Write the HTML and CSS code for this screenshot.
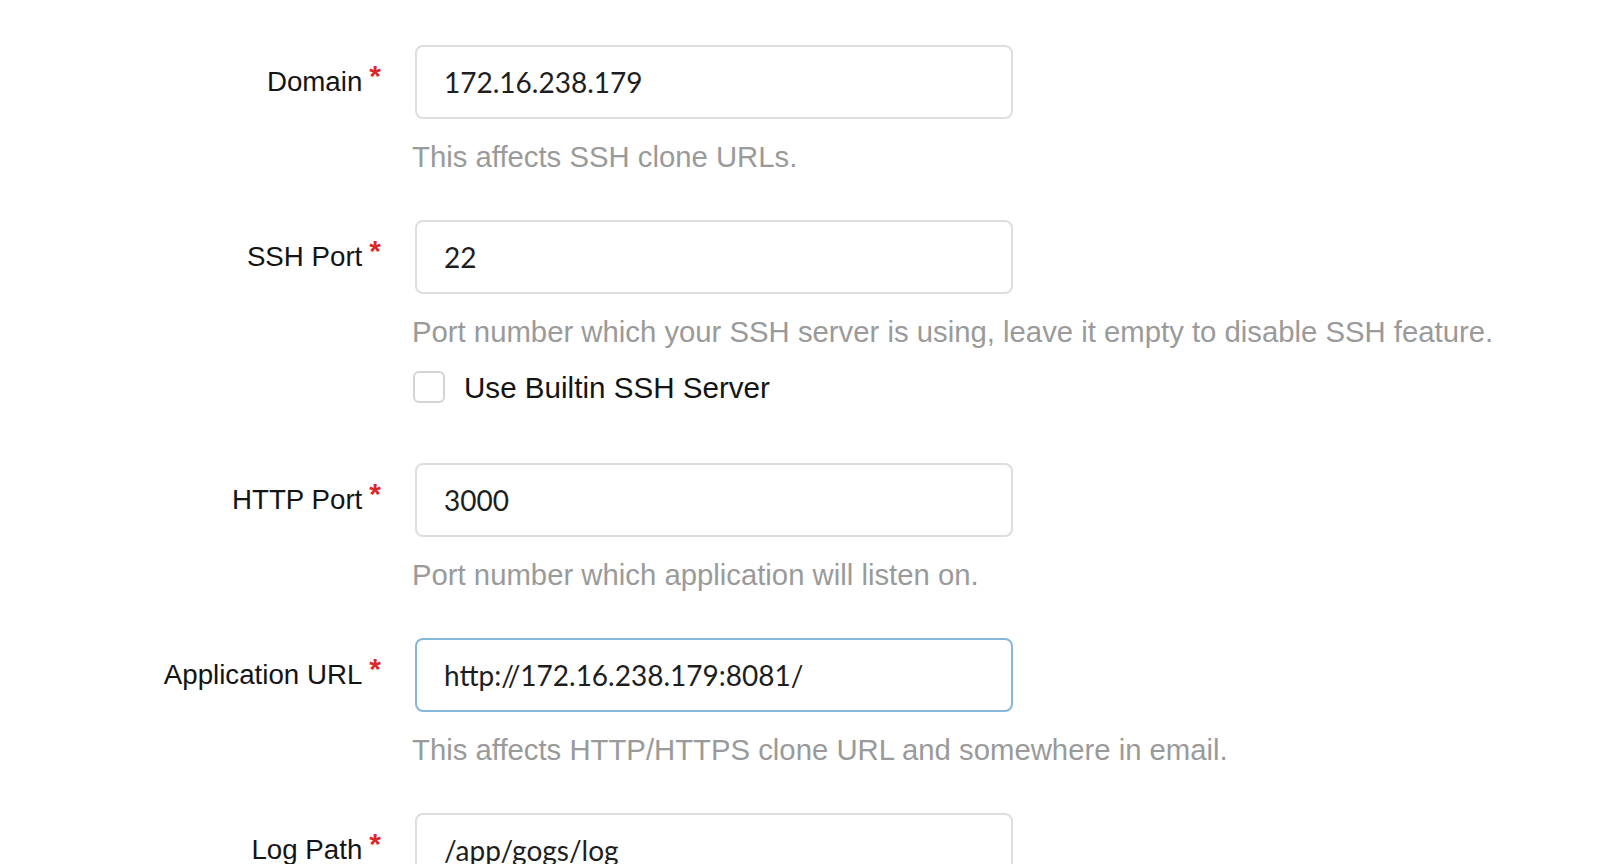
FILE: index.html
```html
<!DOCTYPE html>
<html lang="en">
<head>
<meta charset="utf-8">
<title>Install Gogs</title>
<link rel="stylesheet" href="styles.css">
</head>
<body>
<form class="form">
  <div class="field">
    <div class="row">
      <label class="label required" for="domain">Domain</label>
      <div class="control">
        <input class="input" id="domain" type="text" value="172.16.238.179">
      </div>
    </div>
    <div class="row">
      <div class="spacer"></div>
      <div class="control"><span class="help">This affects SSH clone URLs.</span></div>
    </div>
  </div>

  <div class="field">
    <div class="row">
      <label class="label required" for="ssh">SSH Port</label>
      <div class="control">
        <input class="input" id="ssh" type="text" value="22">
      </div>
    </div>
    <div class="row">
      <div class="spacer"></div>
      <div class="control">
        <span class="help">Port number which your SSH server is using, leave it empty to disable SSH feature.</span>
        <div class="check">
          <input class="box" id="builtin" type="checkbox">
          <label class="check-label" for="builtin">Use Builtin SSH Server</label>
        </div>
      </div>
    </div>
  </div>

  <div class="field field-after-check">
    <div class="row">
      <label class="label required" for="http">HTTP Port</label>
      <div class="control">
        <input class="input" id="http" type="text" value="3000">
      </div>
    </div>
    <div class="row">
      <div class="spacer"></div>
      <div class="control"><span class="help">Port number which application will listen on.</span></div>
    </div>
  </div>

  <div class="field">
    <div class="row">
      <label class="label required" for="url">Application URL</label>
      <div class="control">
        <input class="input focused" id="url" type="text" value="http://172.16.238.179:8081/">
      </div>
    </div>
    <div class="row">
      <div class="spacer"></div>
      <div class="control"><span class="help">This affects HTTP/HTTPS clone URL and somewhere in email.</span></div>
    </div>
  </div>

  <div class="field">
    <div class="row">
      <label class="label required" for="log">Log Path</label>
      <div class="control">
        <input class="input" id="log" type="text" value="/app/gogs/log">
      </div>
    </div>
  </div>
</form>
</body>
</html>
```

FILE: styles.css
```css
html, body {
  margin: 0;
  padding: 0;
  background: #ffffff;
  overflow: hidden;
}

body {
  width: 1604px;
  height: 864px;
  font-family: "Liberation Sans", Arial, sans-serif;
  color: #1b1b1b;
}

.form {
  padding-top: 45px;
  display: flex;
  flex-direction: column;
  gap: 46px;
}

.field {
  display: flex;
  flex-direction: column;
}

.field-after-check {
  margin-top: 12px;
}

.row {
  display: flex;
  align-items: flex-start;
}

.label,
.spacer {
  flex: 0 0 381px;
  width: 381px;
}

.label {
  height: 74px;
  text-align: right;
  font-size: 27.7px;
  line-height: 74px;
  color: #141414;
  white-space: nowrap;
}

.required::after {
  content: "*";
  color: #db2828;
  margin-left: 7px;
  font-size: 30px;
  font-weight: bold;
  line-height: 0;
  vertical-align: 5px;
}

.control {
  margin-left: 31px;
  display: flex;
  flex-direction: column;
  align-items: flex-start;
}

.input {
  box-sizing: border-box;
  width: 598px;
  height: 74px;
  margin: 0 0 0 3px;
  padding: 0 20px 0 27px;
  border: 2px solid #dedede;
  border-radius: 8px;
  background: #ffffff;
  font-family: Lato, "Liberation Sans", sans-serif;
  font-size: 28px;
  color: #1e1e1e;
  outline: none;
}

.input.focused {
  border-color: #85b7d9;
}

.help {
  display: block;
  margin-top: 20px;
  font-size: 29.3px;
  line-height: 35px;
  color: #9a9a9a;
  white-space: nowrap;
}

.check {
  display: flex;
  align-items: flex-start;
  margin-top: 22px;
  margin-left: 1px;
}

.box {
  appearance: none;
  -webkit-appearance: none;
  box-sizing: border-box;
  width: 32px;
  height: 32px;
  margin: 0;
  border: 2px solid #d4d4d5;
  border-radius: 6px;
  background: #ffffff;
}

.check-label {
  margin-left: 19px;
  margin-top: -1px;
  font-size: 29.6px;
  line-height: 35px;
  color: #141414;
}
```
